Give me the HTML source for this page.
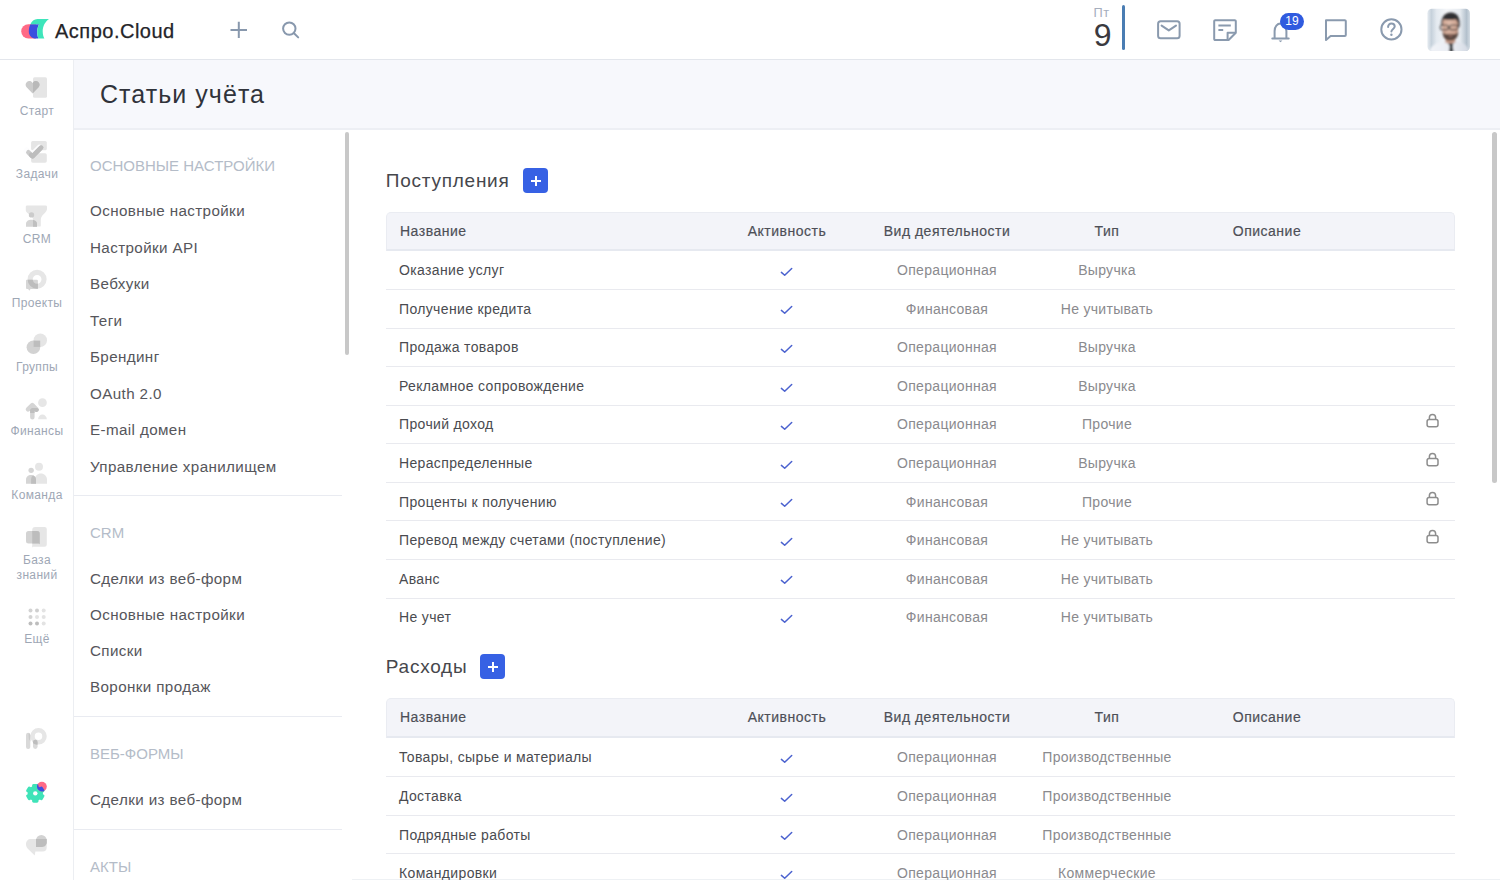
<!DOCTYPE html>
<html><head><meta charset="utf-8">
<style>
*{margin:0;padding:0;box-sizing:border-box}
html,body{width:1500px;height:880px;overflow:hidden;background:#fff;font-family:"Liberation Sans",sans-serif}
.a{position:absolute;white-space:nowrap}
#hdr{position:absolute;left:0;top:0;width:1500px;height:60px;background:#fff;border-bottom:1px solid #e3e6ec}
#side{position:absolute;left:0;top:60px;width:74px;height:820px;background:#fff;border-right:1px solid #eceef2}
#ttl{position:absolute;left:74px;top:60px;width:1426px;height:70px;background:#f7f8fc;border-bottom:2px solid #edeff4}
#menu{position:absolute;left:74px;top:130px;width:278px;height:750px;background:#fff}
.sl{font-size:12px;line-height:12px;color:#9ea7b5;width:74px;text-align:center;left:0;letter-spacing:0.35px}
.mh{font-size:15px;line-height:15px;color:#b4bcc8;left:90px}
.mi{font-size:15.2px;line-height:15px;color:#56565b;left:90px;letter-spacing:0.38px}
.dv{position:absolute;left:74px;width:268px;height:1px;background:#e9ebf1}
.th{position:absolute;left:386px;width:1069px;height:39px;background:#f3f4f9;border:1px solid #eaecf2;border-bottom:2px solid #e6e9f0;border-radius:5px 5px 0 0}
.ht{font-size:14px;line-height:14px;color:#4d4f57;letter-spacing:0.5px;-webkit-text-stroke:0.18px #4d4f57}
.rd{position:absolute;left:386px;width:1069px;height:1px;background:#e9eaef}
.rn{font-size:14px;line-height:14px;color:#4a4b50;left:399px;letter-spacing:0.35px}
.rc{font-size:14px;line-height:14px;color:#8a8a8e;text-align:center;width:200px;letter-spacing:0.3px}
.sec{font-size:19px;line-height:19px;color:#46474c;left:385.8px;letter-spacing:0.75px}
.btn{position:absolute;width:25px;height:25px;background:#3761e4;border-radius:4px}
.btn:before{content:"";position:absolute;left:7.5px;top:11.5px;width:10px;height:2px;background:#fff}
.btn:after{content:"";position:absolute;left:11.5px;top:7.5px;width:2px;height:10px;background:#fff}
</style></head><body>

<!-- HEADER -->
<div id="hdr"></div>
<svg class="a" style="left:21px;top:19px" width="29" height="21" viewBox="0 0 29 21">
  <path d="M15 5.2 L7.4 5.2 A7.1 7.1 0 0 0 7.4 19.5 L15 19.5 Z" fill="#ff6a86"/>
  <path d="M9.5 5.2 L18.2 5.2 C17 7.2 16.3 9.6 16.2 12.2 C16.1 15 16.5 17.3 17.4 19.5 L14.6 19.5 C10.8 19.5 7.8 16.3 7.8 12.4 C7.8 9.6 8.4 7 9.5 5.2 Z" fill="#3b4fdf"/>
  <path d="M9.4 5.3 C10.6 2.3 13 0 16.5 0 L28 0 C24.3 2.6 21.7 7 21.7 12.2 C21.7 15 22.3 17.5 23.4 19.5 L17.4 19.5 C16.5 17.3 16.1 15 16.2 12.2 C16.3 9.6 17 7.2 18.2 5.3 Z" fill="#3ee5bb"/>
</svg>
<div class="a" style="left:55px;top:21.3px;font-size:20px;line-height:20px;color:#242428;-webkit-text-stroke:0.25px #242428;letter-spacing:0.5px">Аспро.Cloud</div>
<svg class="a" style="left:229px;top:20px" width="20" height="20" viewBox="0 0 20 20">
  <path d="M1.5 10 H18 M9.8 1.8 V18" stroke="#8898ad" stroke-width="2" fill="none"/>
</svg>
<svg class="a" style="left:280px;top:19px" width="22" height="22" viewBox="0 0 22 22">
  <circle cx="9.3" cy="9.6" r="6.2" stroke="#8898ad" stroke-width="2" fill="none"/>
  <path d="M14 14.2 L18.2 18.4" stroke="#8898ad" stroke-width="2" stroke-linecap="round"/>
</svg>

<div class="a" style="left:1093.5px;top:7.1px;font-size:12.8px;line-height:12.5px;color:#a5aebd;letter-spacing:0.6px">Пт</div>
<div class="a" style="left:1093.8px;top:18.9px;font-size:32px;line-height:32px;color:#3a3a40">9</div>
<div class="a" style="left:1122px;top:5px;width:3px;height:45px;background:#4a7db3;border-radius:2px"></div>

<!-- mail -->
<svg class="a" style="left:1155px;top:18px" width="28" height="24" viewBox="0 0 28 24">
  <rect x="3.1" y="3.3" width="21.5" height="17" rx="2.5" stroke="#8a9aae" stroke-width="2" fill="none"/>
  <path d="M6.6 7.6 L13.8 12.4 L21 7.6" stroke="#8a9aae" stroke-width="2" fill="none" stroke-linecap="round" stroke-linejoin="round"/>
</svg>
<!-- note -->
<svg class="a" style="left:1211px;top:17px" width="28" height="26" viewBox="0 0 28 26">
  <path d="M4.2 3.2 H23.8 A1 1 0 0 1 24.8 4.2 V15.8 L17.6 23 H4.2 A1 1 0 0 1 3.2 22 V4.2 A1 1 0 0 1 4.2 3.2 Z" stroke="#8a9aae" stroke-width="2" fill="none" stroke-linejoin="round"/>
  <path d="M16.6 23 V15.8 H24.8" stroke="#8a9aae" stroke-width="2" fill="none" stroke-linejoin="round"/>
  <path d="M7.4 8.6 H19.8 M7.4 13 H12.2" stroke="#8a9aae" stroke-width="2" fill="none"/>
</svg>
<!-- bell -->
<svg class="a" style="left:1269px;top:18px" width="24" height="26" viewBox="0 0 24 26">
  <path d="M5.6 20.5 V13 C5.6 8.8 8.3 5.6 11.5 5.6 C14.7 5.6 17.4 8.8 17.4 13 V20.5" stroke="#8a9aae" stroke-width="2" fill="none"/>
  <path d="M3.3 20.5 H19.7" stroke="#8a9aae" stroke-width="2" stroke-linecap="round"/>
  <path d="M9.6 22.6 H13.4 L11.5 24.2 Z" fill="#8a9aae"/>
</svg>
<div class="a" style="left:1280px;top:12.8px;width:24px;height:17.2px;background:#2f5bdf;border-radius:9px;color:#fff;font-size:12px;line-height:17.2px;text-align:center;letter-spacing:0.2px">19</div>
<!-- chat -->
<svg class="a" style="left:1322px;top:17px" width="28" height="26" viewBox="0 0 28 26">
  <path d="M4 3.2 H22.8 A1 1 0 0 1 23.8 4.2 V18 A1 1 0 0 1 22.8 19 H8.6 L4 23 Z" stroke="#8a9aae" stroke-width="2" fill="none" stroke-linejoin="round"/>
</svg>
<!-- help -->
<svg class="a" style="left:1378px;top:16px" width="27" height="27" viewBox="0 0 27 27">
  <circle cx="13.4" cy="13.4" r="10.1" stroke="#8a9aae" stroke-width="2" fill="none"/>
  <path d="M10.1 11 C10.1 8.8 11.6 7.6 13.4 7.6 C15.3 7.6 16.7 8.9 16.7 10.6 C16.7 12.9 13.4 13.1 13.4 15.6" stroke="#8a9aae" stroke-width="2" fill="none" stroke-linecap="round"/>
  <circle cx="13.4" cy="18.8" r="1.2" fill="#8a9aae"/>
</svg>
<!-- avatar -->
<svg class="a" style="left:1427px;top:8px" width="44" height="44" viewBox="0 0 44 44">
  <defs>
    <clipPath id="avc"><rect x="0.4" y="0.7" width="42.6" height="42.3" rx="4.5"/></clipPath>
    <linearGradient id="avbg" x1="0" y1="0" x2="1" y2="0">
      <stop offset="0" stop-color="#e9eef3"/><stop offset="0.1" stop-color="#c6d1db"/><stop offset="0.22" stop-color="#e4eaf0"/><stop offset="0.45" stop-color="#f4f6f9"/><stop offset="0.75" stop-color="#e6ebf0"/><stop offset="0.9" stop-color="#b3c0cc"/><stop offset="1" stop-color="#dde4ea"/>
    </linearGradient>
    <radialGradient id="avsk" cx="0.45" cy="0.4" r="0.6"><stop offset="0" stop-color="#e2bfae"/><stop offset="1" stop-color="#c99c88"/></radialGradient>
    <linearGradient id="avsh" x1="0" y1="0" x2="1" y2="0"><stop offset="0" stop-color="#f2f4f8"/><stop offset="0.6" stop-color="#e9ecf2"/><stop offset="1" stop-color="#d3d9e3"/></linearGradient>
    <filter id="avb" x="-20%" y="-20%" width="140%" height="140%"><feGaussianBlur stdDeviation="0.9"/></filter>
  </defs>
  <g clip-path="url(#avc)">
    <rect width="44" height="44" fill="url(#avbg)"/>
    <g filter="url(#avb)">
    <path d="M2 44 C3 38 10 34.6 17 33.2 L29 33.2 C36 34.6 41.5 38 42.5 44 Z" fill="url(#avsh)"/>
    <path d="M18.6 28.5 L28.2 28.5 L28.4 34.4 L23.4 36.6 L18.2 34.4 Z" fill="#c49986"/>
    <path d="M15 15 C15 9.6 18.6 7.2 23.2 7.2 C28.2 7.2 31.4 10 31.4 15.2 L31.2 22 C30.8 28.6 28 32 23.4 32 C18.8 32 15.8 28.6 15.4 22 Z" fill="url(#avsk)"/>
    <path d="M14.4 17.2 C13.8 9.6 17.6 4.4 23.8 4.4 C30.2 4.4 33.4 9.2 32.6 18.6 L31.2 19.6 C31 14.6 30.2 12 28.4 11.2 C25.4 12 20.2 11.8 16.6 11.2 C15.8 12.6 15.6 15.2 15.6 18.6 Z" fill="#2f2e31"/>
    <path d="M15.6 23.4 C15.6 29.6 18.8 32.6 23.5 32.6 C28.2 32.6 31.2 29.6 31.3 23.2 C30 25.4 28.4 26.3 26.4 26.1 C24.6 25.8 22.4 25.8 20.6 26.1 C18.4 26.4 16.8 25.4 15.6 23.4 Z" fill="#584640"/>
    <path d="M20.8 27.8 C22.2 27.1 25 27.1 26.4 27.8 C25 28.7 22.2 28.7 20.8 27.8 Z" fill="#b98273"/>
    <rect x="13.4" y="17.2" width="7.8" height="4.4" rx="1.2" fill="none" stroke="#3d3838" stroke-width="1.1"/>
    <rect x="22.8" y="17.2" width="7.8" height="4.4" rx="1.2" fill="none" stroke="#3d3838" stroke-width="1.1"/>
    <path d="M21.2 35.6 L26.4 35.6 L25.7 38.2 L26.6 44 L22 44 L22.8 38.2 Z" fill="#2b3036"/>
    </g>
  </g>
</svg>
<!-- SIDEBAR -->
<div id="side"></div>
<!-- start icon -->
<svg class="a" style="left:25px;top:77px" width="23" height="23" viewBox="0 0 23 23">
  <rect x="8" y="0.2" width="14" height="20.6" rx="1.6" fill="#e5e5e5"/>
  <g transform="translate(0,0.6)"><path d="M7.6 15.8 L1.6 9.6 C0.2 8.2 0.3 5.6 1.9 4.3 C3.5 3 5.9 3.3 7.2 4.9 L7.6 5.3 L8 4.9 C9.3 3.3 11.7 3 13.3 4.3 C14.9 5.6 15 8.2 13.6 9.6 Z" fill="#cbcbcb"/>
  <path d="M8 15.4 L13.6 9.6 C15 8.2 14.9 5.6 13.3 4.3 C11.7 3 9.3 3.3 8 4.9 Z" fill="#b9b9b9"/></g>
</svg>
<div class="a sl" style="top:104.5px">Старт</div>
<!-- tasks -->
<svg class="a" style="left:22px;top:138px" width="28" height="28" viewBox="0 0 28 28">
  <rect x="9.1" y="3" width="15.7" height="9.3" rx="1.6" fill="#e5e5e5"/>
  <rect x="9.1" y="15.3" width="15.7" height="9.4" rx="1.6" fill="#e5e5e5"/>
  <path d="M5.4 13.3 L10.5 18.1 L18.1 10.5" stroke="#fdfdfe" stroke-width="6.4" fill="none" stroke-linecap="round" stroke-linejoin="round" transform="translate(-0.6,-0.6)"/>
  <path d="M6.4 14.3 L10.5 18.3 L19.1 9.6" stroke="#cbcbcb" stroke-width="4.6" fill="none" stroke-linecap="round" stroke-linejoin="round"/>
  <path d="M9.1 17 L10.5 18.3 L19.1 9.6" stroke="#bdbdbd" stroke-width="4.6" fill="none" stroke-linecap="round" stroke-linejoin="round"/>
</svg>
<div class="a sl" style="top:167.5px">Задачи</div>
<!-- crm -->
<svg class="a" style="left:22px;top:202px" width="28" height="28" viewBox="0 0 28 28">
  <path d="M3.8 4.8 A1.3 1.3 0 0 1 5.1 3.5 H23.7 A1.3 1.3 0 0 1 25 4.8 V7 C25 10.5 18.8 13 18.8 17.5 V23.4 A1.2 1.2 0 0 1 17.6 24.6 H11 V17.2 C11 13.4 3.8 11.6 3.8 8.6 Z" fill="#e6e6e6"/>
  <circle cx="9.5" cy="12.9" r="2.7" fill="#cbcbcb"/>
  <path d="M4 24.7 V21.6 C4 19.4 6.4 17.8 9.5 17.8 C12.6 17.8 15 19.4 15 21.6 V24.7 Z" fill="#d5d5d5"/>
  <path d="M11 24.7 V17.95 C13.4 18.3 15 19.8 15 21.6 V24.7 Z" fill="#bfbfbf"/>
</svg>
<div class="a sl" style="top:232.5px">CRM</div>
<!-- projects -->
<svg class="a" style="left:22px;top:266px" width="28" height="28" viewBox="0 0 28 28">
  <circle cx="15.1" cy="13.3" r="6.95" stroke="#e6e6e6" stroke-width="5.1" fill="none"/>
  <path d="M5 13.8 H14.9 A1 1 0 0 1 15.9 14.8 V21.9 A1 1 0 0 1 14.9 22.9 H8.6 L7.2 24.7 L6.2 22.9 H5 A1 1 0 0 1 4 21.9 V14.8 A1 1 0 0 1 5 13.8 Z" fill="#d6d6d6"/>
  <clipPath id="pjc"><rect x="4" y="13.8" width="11.9" height="9.1"/></clipPath>
  <circle cx="15.1" cy="13.3" r="6.95" stroke="#bdbdbd" stroke-width="5.1" fill="none" clip-path="url(#pjc)"/>
</svg>
<div class="a sl" style="top:296.5px">Проекты</div>
<!-- groups -->
<svg class="a" style="left:25px;top:333px" width="23" height="22" viewBox="0 0 23 22">
  <circle cx="15.3" cy="7.2" r="6.7" fill="#e5e5e5"/>
  <circle cx="8.4" cy="14.2" r="6.8" fill="#d2d2d2"/>
  <path d="M8.6 7.6 H15.2 V13.9 H8.6 Z" fill="#bdbdbd"/>
</svg>
<div class="a sl" style="top:361px">Группы</div>
<!-- finance -->
<svg class="a" style="left:22px;top:396px" width="28" height="28" viewBox="0 0 28 28">
  <defs><mask id="fnm"><path d="M6 13.4 L10.3 9.05 L14.6 13.6 M10.35 9.4 V21.3" stroke="#fff" stroke-width="4.5" fill="none" stroke-linecap="round" stroke-linejoin="round"/></mask></defs>
  <circle cx="20.45" cy="6.7" r="4.35" fill="#e6e6e6"/>
  <path d="M16.1 23.2 A4.35 4.6 0 0 1 24.8 23.2 Z" fill="#e6e6e6"/>
  <path d="M6 13.4 L10.3 9.05 L14.6 13.6 M10.35 9.4 V21.3" stroke="#d5d5d5" stroke-width="4.5" fill="none" stroke-linecap="round" stroke-linejoin="round"/>
  <path d="M8.4 16.6 L12.7 12.25 L17 16.8 M12.75 12.6 V16.6" stroke="#bfbfbf" stroke-width="4.5" fill="none" stroke-linecap="round" stroke-linejoin="round" mask="url(#fnm)"/>
</svg>
<div class="a sl" style="top:425px">Финансы</div>
<!-- team -->
<svg class="a" style="left:22px;top:460px" width="28" height="28" viewBox="0 0 28 28">
  <circle cx="17" cy="6.85" r="4" fill="#e6e6e6"/>
  <path d="M12.7 23.7 V19.6 C12.7 16.1 15.5 13.4 18.85 13.4 C22.2 13.4 25 16.1 25 19.6 V23.7 Z" fill="#e6e6e6"/>
  <circle cx="9.15" cy="10.35" r="2.7" fill="#d5d5d5"/>
  <path d="M4 23.7 V19.5 C4 16.9 6.1 14.95 9 14.95 C11.9 14.95 14 16.9 14 19.5 V23.7 Z" fill="#d5d5d5"/>
  <path d="M9.1 23.7 V19.2 C9.1 17.2 10 15.8 11.3 15.4 C13 16 14 17.6 14 19.5 V23.7 Z" fill="#bfbfbf"/>
</svg>
<div class="a sl" style="top:489px">Команда</div>
<!-- knowledge -->
<svg class="a" style="left:22px;top:522px" width="28" height="28" viewBox="0 0 28 28">
  <path d="M13.2 4.9 H22.6 A2.2 2.2 0 0 1 24.8 7.1 V22.5 A2.2 2.2 0 0 1 22.6 24.7 H11.2 L10.2 25.6 V7.9 A3 3 0 0 1 13.2 4.9 Z" fill="#e6e6e6"/>
  <path d="M6.5 9.1 H15.2 A2.5 2.5 0 0 1 17.7 11.6 V22.2 L16.9 21.6 H6.5 A2.5 2.5 0 0 1 4 19.1 V11.6 A2.5 2.5 0 0 1 6.5 9.1 Z" fill="#d3d3d3"/>
  <path d="M10.2 9.1 H15.2 A2.5 2.5 0 0 1 17.7 11.6 V22.2 L16.9 21.6 H10.2 Z" fill="#bdbdbd"/>
</svg>
<div class="a sl" style="top:553px;line-height:15.2px;white-space:normal">База<br>знаний</div>
<!-- more -->
<svg class="a" style="left:27.5px;top:607.5px" width="21" height="21" viewBox="0 0 21 21">
  <circle cx="2.5" cy="2.5" r="2" fill="#d3d3d3"/><circle cx="9" cy="2.5" r="2" fill="#cfcfcf"/><circle cx="15.7" cy="2.5" r="2" fill="#e3e3e3"/>
  <circle cx="2.5" cy="9" r="2" fill="#d3d3d3"/><circle cx="9" cy="9" r="2" fill="#e3e3e3"/><circle cx="15.7" cy="9" r="2" fill="#e3e3e3"/>
  <circle cx="2.5" cy="15.6" r="2" fill="#bdbdbd"/><circle cx="9" cy="15.6" r="2" fill="#bdbdbd"/><circle cx="15.7" cy="15.6" r="2" fill="#e3e3e3"/>
</svg>
<div class="a sl" style="top:633px">Ещё</div>
<!-- bottom icons -->
<svg class="a" style="left:22px;top:726px" width="28" height="28" viewBox="0 0 28 28">
  <circle cx="16.5" cy="10.3" r="6" stroke="#e6e6e6" stroke-width="4.5" fill="none"/>
  <rect x="4" y="6.8" width="4.3" height="16.3" rx="2.15" fill="#d9d9d9"/>
  <path d="M6.6 7.2 A2.15 2.15 0 0 1 8.3 9 V15.4 A8 8 0 0 1 6.6 10 Z" fill="#cacaca"/>
  <rect x="11" y="13.8" width="4.6" height="9.1" rx="2.3" fill="#dadada"/>
  <path d="M11 16.1 A2.3 2.3 0 0 1 15.6 16.1 V18.6 A6.5 6.5 0 0 1 11 17.2 Z" fill="#bdbdbd"/>
</svg>
<svg class="a" style="left:22px;top:778px" width="28" height="28" viewBox="0 0 28 28">
  <defs><clipPath id="gcp"><circle cx="13.3" cy="15.35" r="7.6"/><rect x="-3.1" y="-9.4" width="6.2" height="6" rx="1.4" transform="translate(13.3,15.35) rotate(0)"/><rect x="-3.1" y="-9.4" width="6.2" height="6" rx="1.4" transform="translate(13.3,15.35) rotate(60)"/><rect x="-3.1" y="-9.4" width="6.2" height="6" rx="1.4" transform="translate(13.3,15.35) rotate(120)"/><rect x="-3.1" y="-9.4" width="6.2" height="6" rx="1.4" transform="translate(13.3,15.35) rotate(180)"/><rect x="-3.1" y="-9.4" width="6.2" height="6" rx="1.4" transform="translate(13.3,15.35) rotate(240)"/><rect x="-3.1" y="-9.4" width="6.2" height="6" rx="1.4" transform="translate(13.3,15.35) rotate(300)"/></clipPath></defs>
  <g transform="translate(13.3,15.35)" fill="#3fe3b8"><circle r="7.6"/><rect x="-3.1" y="-9.4" width="6.2" height="6" rx="1.4" transform="rotate(0)"/><rect x="-3.1" y="-9.4" width="6.2" height="6" rx="1.4" transform="rotate(60)"/><rect x="-3.1" y="-9.4" width="6.2" height="6" rx="1.4" transform="rotate(120)"/><rect x="-3.1" y="-9.4" width="6.2" height="6" rx="1.4" transform="rotate(180)"/><rect x="-3.1" y="-9.4" width="6.2" height="6" rx="1.4" transform="rotate(240)"/><rect x="-3.1" y="-9.4" width="6.2" height="6" rx="1.4" transform="rotate(300)"/></g>
  <circle cx="13.3" cy="15.35" r="2.2" fill="#fdfdfe"/>
  <circle cx="19.9" cy="8.6" r="4.9" fill="#ff6a86"/>
  <circle cx="19.9" cy="8.6" r="4.9" fill="#3b4fe0" clip-path="url(#gcp)"/>
</svg>
<svg class="a" style="left:22px;top:830px" width="28" height="28" viewBox="0 0 28 28">
  <path d="M4 13.6 A4.5 4.5 0 0 1 8.5 9.1 H24.7 V17.6 A4 4 0 0 1 20.7 21.6 H13.4 L12.7 25.4 L5.6 18.6 C4.6 17.4 4 16 4 14.6 Z" fill="#e6e6e6"/>
  <path d="M14 16.9 V10.25 A5.35 5.35 0 0 1 24.7 10.25 V12.2 C24.7 14.8 22.6 16.9 20 16.9 Z" fill="#d2d2d2"/>
  <path d="M14 16.9 V9.1 H24.7 V12.2 C24.7 14.8 22.6 16.9 20 16.9 Z" fill="#bdbdbd"/>
</svg>

<!-- TITLE -->
<div id="ttl"></div>
<div class="a" style="left:100px;top:82.3px;font-size:25px;line-height:25px;color:#30333a;letter-spacing:1.05px">Статьи учёта</div>

<!-- MENU -->
<div id="menu"></div>
<div class="a" style="left:345px;top:132px;width:4px;height:223px;background:#c8c8c8;border-radius:2px"></div>
<div class="a mh" style="top:157.8px">ОСНОВНЫЕ НАСТРОЙКИ</div>
<div class="a mi" style="top:203.4px">Основные настройки</div>
<div class="a mi" style="top:239.9px">Настройки API</div>
<div class="a mi" style="top:276.3px">Вебхуки</div>
<div class="a mi" style="top:312.8px">Теги</div>
<div class="a mi" style="top:349.2px">Брендинг</div>
<div class="a mi" style="top:385.7px">OAuth 2.0</div>
<div class="a mi" style="top:422.1px">E-mail домен</div>
<div class="a mi" style="top:458.6px">Управление хранилищем</div>
<div class="dv" style="top:494.5px"></div>
<div class="a mh" style="top:524.7px">CRM</div>
<div class="a mi" style="top:571px">Сделки из веб-форм</div>
<div class="a mi" style="top:607px">Основные настройки</div>
<div class="a mi" style="top:643.1px">Списки</div>
<div class="a mi" style="top:679.1px">Воронки продаж</div>
<div class="dv" style="top:716px"></div>
<div class="a mh" style="top:746.4px">ВЕБ-ФОРМЫ</div>
<div class="a mi" style="top:792px">Сделки из веб-форм</div>
<div class="dv" style="top:829px"></div>
<div class="a mh" style="top:858.5px">АКТЫ</div>

<!-- MAIN -->
<div class="a" style="left:352px;top:879px;width:1148px;height:1px;background:#eef1f4"></div>
<div class="a" style="left:1492px;top:132px;width:5px;height:351px;background:#c8c8c8;border-radius:2.5px"></div>

<div class="a sec" style="top:170.5px">Поступления</div>
<div class="btn" style="left:523px;top:168px"></div>
<div class="th" style="top:212px;height:39px"></div>
<div class="a ht" style="left:400px;top:223.95px">Название</div>
<div class="a ht" style="left:687px;width:200px;text-align:center;top:223.95px">Активность</div>
<div class="a ht" style="left:847px;width:200px;text-align:center;top:223.95px">Вид деятельности</div>
<div class="a ht" style="left:1007px;width:200px;text-align:center;top:223.95px">Тип</div>
<div class="a ht" style="left:1167px;width:200px;text-align:center;top:223.95px">Описание</div>
<div class="a rn" style="top:263.15px">Оказание услуг</div>
<svg class="a" style="left:779px;top:266.8px" width="16" height="12" viewBox="0 0 16 12"><path d="M2.4 5.4 L5.7 8.3 L12.7 1.5" stroke="#4b62cf" stroke-width="1.5" fill="none" stroke-linecap="round" stroke-linejoin="round"/></svg>
<div class="a rc" style="left:847px;top:263.15px">Операционная</div>
<div class="a rc" style="left:1007px;top:263.15px">Выручка</div>
<div class="rd" style="top:289px"></div>
<div class="a rn" style="top:301.72px">Получение кредита</div>
<svg class="a" style="left:779px;top:305.37px" width="16" height="12" viewBox="0 0 16 12"><path d="M2.4 5.4 L5.7 8.3 L12.7 1.5" stroke="#4b62cf" stroke-width="1.5" fill="none" stroke-linecap="round" stroke-linejoin="round"/></svg>
<div class="a rc" style="left:847px;top:301.72px">Финансовая</div>
<div class="a rc" style="left:1007px;top:301.72px">Не учитывать</div>
<div class="rd" style="top:327.57px"></div>
<div class="a rn" style="top:340.29px">Продажа товаров</div>
<svg class="a" style="left:779px;top:343.94px" width="16" height="12" viewBox="0 0 16 12"><path d="M2.4 5.4 L5.7 8.3 L12.7 1.5" stroke="#4b62cf" stroke-width="1.5" fill="none" stroke-linecap="round" stroke-linejoin="round"/></svg>
<div class="a rc" style="left:847px;top:340.29px">Операционная</div>
<div class="a rc" style="left:1007px;top:340.29px">Выручка</div>
<div class="rd" style="top:366.14px"></div>
<div class="a rn" style="top:378.86px">Рекламное сопровождение</div>
<svg class="a" style="left:779px;top:382.51px" width="16" height="12" viewBox="0 0 16 12"><path d="M2.4 5.4 L5.7 8.3 L12.7 1.5" stroke="#4b62cf" stroke-width="1.5" fill="none" stroke-linecap="round" stroke-linejoin="round"/></svg>
<div class="a rc" style="left:847px;top:378.86px">Операционная</div>
<div class="a rc" style="left:1007px;top:378.86px">Выручка</div>
<div class="rd" style="top:404.71px"></div>
<div class="a rn" style="top:417.43px">Прочий доход</div>
<svg class="a" style="left:779px;top:421.08px" width="16" height="12" viewBox="0 0 16 12"><path d="M2.4 5.4 L5.7 8.3 L12.7 1.5" stroke="#4b62cf" stroke-width="1.5" fill="none" stroke-linecap="round" stroke-linejoin="round"/></svg>
<div class="a rc" style="left:847px;top:417.43px">Операционная</div>
<div class="a rc" style="left:1007px;top:417.43px">Прочие</div>
<svg class="a" style="left:1424px;top:413.48px" width="17" height="17" viewBox="0 0 17 17"><path d="M5.4 6.6 V4.6 A3.1 3.1 0 0 1 11.6 4.6 V6.6" stroke="#8d8d8d" stroke-width="1.5" fill="none"/><rect x="3.1" y="6.6" width="10.9" height="7.2" rx="2" stroke="#8d8d8d" stroke-width="1.5" fill="none"/></svg>
<div class="rd" style="top:443.28px"></div>
<div class="a rn" style="top:456px">Нераспределенные</div>
<svg class="a" style="left:779px;top:459.65px" width="16" height="12" viewBox="0 0 16 12"><path d="M2.4 5.4 L5.7 8.3 L12.7 1.5" stroke="#4b62cf" stroke-width="1.5" fill="none" stroke-linecap="round" stroke-linejoin="round"/></svg>
<div class="a rc" style="left:847px;top:456px">Операционная</div>
<div class="a rc" style="left:1007px;top:456px">Выручка</div>
<svg class="a" style="left:1424px;top:452.05px" width="17" height="17" viewBox="0 0 17 17"><path d="M5.4 6.6 V4.6 A3.1 3.1 0 0 1 11.6 4.6 V6.6" stroke="#8d8d8d" stroke-width="1.5" fill="none"/><rect x="3.1" y="6.6" width="10.9" height="7.2" rx="2" stroke="#8d8d8d" stroke-width="1.5" fill="none"/></svg>
<div class="rd" style="top:481.85px"></div>
<div class="a rn" style="top:494.57px">Проценты к получению</div>
<svg class="a" style="left:779px;top:498.22px" width="16" height="12" viewBox="0 0 16 12"><path d="M2.4 5.4 L5.7 8.3 L12.7 1.5" stroke="#4b62cf" stroke-width="1.5" fill="none" stroke-linecap="round" stroke-linejoin="round"/></svg>
<div class="a rc" style="left:847px;top:494.57px">Финансовая</div>
<div class="a rc" style="left:1007px;top:494.57px">Прочие</div>
<svg class="a" style="left:1424px;top:490.62px" width="17" height="17" viewBox="0 0 17 17"><path d="M5.4 6.6 V4.6 A3.1 3.1 0 0 1 11.6 4.6 V6.6" stroke="#8d8d8d" stroke-width="1.5" fill="none"/><rect x="3.1" y="6.6" width="10.9" height="7.2" rx="2" stroke="#8d8d8d" stroke-width="1.5" fill="none"/></svg>
<div class="rd" style="top:520.42px"></div>
<div class="a rn" style="top:533.14px">Перевод между счетами (поступление)</div>
<svg class="a" style="left:779px;top:536.79px" width="16" height="12" viewBox="0 0 16 12"><path d="M2.4 5.4 L5.7 8.3 L12.7 1.5" stroke="#4b62cf" stroke-width="1.5" fill="none" stroke-linecap="round" stroke-linejoin="round"/></svg>
<div class="a rc" style="left:847px;top:533.14px">Финансовая</div>
<div class="a rc" style="left:1007px;top:533.14px">Не учитывать</div>
<svg class="a" style="left:1424px;top:529.19px" width="17" height="17" viewBox="0 0 17 17"><path d="M5.4 6.6 V4.6 A3.1 3.1 0 0 1 11.6 4.6 V6.6" stroke="#8d8d8d" stroke-width="1.5" fill="none"/><rect x="3.1" y="6.6" width="10.9" height="7.2" rx="2" stroke="#8d8d8d" stroke-width="1.5" fill="none"/></svg>
<div class="rd" style="top:558.99px"></div>
<div class="a rn" style="top:571.71px">Аванс</div>
<svg class="a" style="left:779px;top:575.36px" width="16" height="12" viewBox="0 0 16 12"><path d="M2.4 5.4 L5.7 8.3 L12.7 1.5" stroke="#4b62cf" stroke-width="1.5" fill="none" stroke-linecap="round" stroke-linejoin="round"/></svg>
<div class="a rc" style="left:847px;top:571.71px">Финансовая</div>
<div class="a rc" style="left:1007px;top:571.71px">Не учитывать</div>
<div class="rd" style="top:597.56px"></div>
<div class="a rn" style="top:610.28px">Не учет</div>
<svg class="a" style="left:779px;top:613.93px" width="16" height="12" viewBox="0 0 16 12"><path d="M2.4 5.4 L5.7 8.3 L12.7 1.5" stroke="#4b62cf" stroke-width="1.5" fill="none" stroke-linecap="round" stroke-linejoin="round"/></svg>
<div class="a rc" style="left:847px;top:610.28px">Финансовая</div>
<div class="a rc" style="left:1007px;top:610.28px">Не учитывать</div>
<div class="a sec" style="top:656.9px">Расходы</div>
<div class="btn" style="left:480px;top:654.4px"></div>
<div class="th" style="top:698.4px;height:39.8px"></div>
<div class="a ht" style="left:400px;top:710.35px">Название</div>
<div class="a ht" style="left:687px;width:200px;text-align:center;top:710.35px">Активность</div>
<div class="a ht" style="left:847px;width:200px;text-align:center;top:710.35px">Вид деятельности</div>
<div class="a ht" style="left:1007px;width:200px;text-align:center;top:710.35px">Тип</div>
<div class="a ht" style="left:1167px;width:200px;text-align:center;top:710.35px">Описание</div>
<div class="a rn" style="top:750.45px">Товары, сырье и материалы</div>
<svg class="a" style="left:779px;top:754.1px" width="16" height="12" viewBox="0 0 16 12"><path d="M2.4 5.4 L5.7 8.3 L12.7 1.5" stroke="#4b62cf" stroke-width="1.5" fill="none" stroke-linecap="round" stroke-linejoin="round"/></svg>
<div class="a rc" style="left:847px;top:750.45px">Операционная</div>
<div class="a rc" style="left:1007px;top:750.45px">Производственные</div>
<div class="rd" style="top:776.3px"></div>
<div class="a rn" style="top:789.02px">Доставка</div>
<svg class="a" style="left:779px;top:792.67px" width="16" height="12" viewBox="0 0 16 12"><path d="M2.4 5.4 L5.7 8.3 L12.7 1.5" stroke="#4b62cf" stroke-width="1.5" fill="none" stroke-linecap="round" stroke-linejoin="round"/></svg>
<div class="a rc" style="left:847px;top:789.02px">Операционная</div>
<div class="a rc" style="left:1007px;top:789.02px">Производственные</div>
<div class="rd" style="top:814.87px"></div>
<div class="a rn" style="top:827.59px">Подрядные работы</div>
<svg class="a" style="left:779px;top:831.24px" width="16" height="12" viewBox="0 0 16 12"><path d="M2.4 5.4 L5.7 8.3 L12.7 1.5" stroke="#4b62cf" stroke-width="1.5" fill="none" stroke-linecap="round" stroke-linejoin="round"/></svg>
<div class="a rc" style="left:847px;top:827.59px">Операционная</div>
<div class="a rc" style="left:1007px;top:827.59px">Производственные</div>
<div class="rd" style="top:853.44px"></div>
<div class="a rn" style="top:866.16px">Командировки</div>
<svg class="a" style="left:779px;top:869.81px" width="16" height="12" viewBox="0 0 16 12"><path d="M2.4 5.4 L5.7 8.3 L12.7 1.5" stroke="#4b62cf" stroke-width="1.5" fill="none" stroke-linecap="round" stroke-linejoin="round"/></svg>
<div class="a rc" style="left:847px;top:866.16px">Операционная</div>
<div class="a rc" style="left:1007px;top:866.16px">Коммерческие</div>

</body></html>
